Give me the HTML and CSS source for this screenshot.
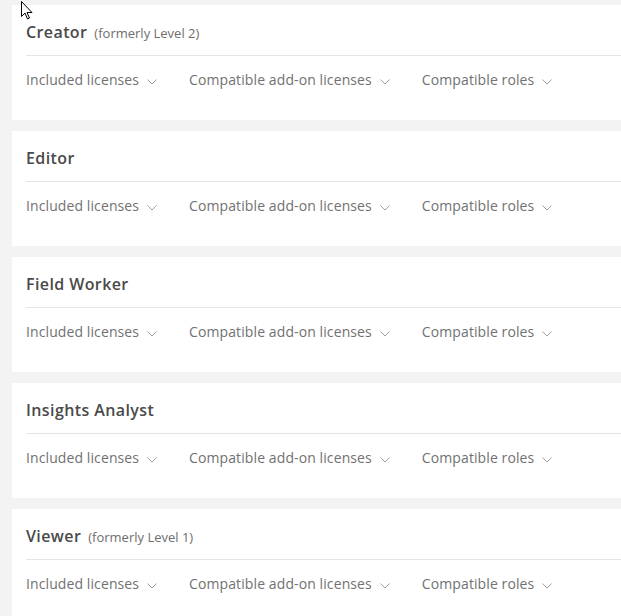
FILE: index.html
```html
<!DOCTYPE html>
<html>
<head>
<meta charset="utf-8">
<link rel="stylesheet" href="styles.css">
</head>
<body>
<div class="list">
  <section class="card">
    <div class="head"><h2 class="title">Creator</h2><span class="note">(formerly Level 2)</span></div>
    <div class="links">
      <span class="link">Included licenses <svg class="chev" viewBox="0 0 10 6"><path d="M0.5 0.5l4.5 4.5 4.5-4.5"/></svg></span>
      <span class="link">Compatible add-on licenses <svg class="chev" viewBox="0 0 10 6"><path d="M0.5 0.5l4.5 4.5 4.5-4.5"/></svg></span>
      <span class="link">Compatible roles <svg class="chev" viewBox="0 0 10 6"><path d="M0.5 0.5l4.5 4.5 4.5-4.5"/></svg></span>
    </div>
  </section>
  <section class="card">
    <div class="head"><h2 class="title">Editor</h2></div>
    <div class="links">
      <span class="link">Included licenses <svg class="chev" viewBox="0 0 10 6"><path d="M0.5 0.5l4.5 4.5 4.5-4.5"/></svg></span>
      <span class="link">Compatible add-on licenses <svg class="chev" viewBox="0 0 10 6"><path d="M0.5 0.5l4.5 4.5 4.5-4.5"/></svg></span>
      <span class="link">Compatible roles <svg class="chev" viewBox="0 0 10 6"><path d="M0.5 0.5l4.5 4.5 4.5-4.5"/></svg></span>
    </div>
  </section>
  <section class="card">
    <div class="head"><h2 class="title">Field Worker</h2></div>
    <div class="links">
      <span class="link">Included licenses <svg class="chev" viewBox="0 0 10 6"><path d="M0.5 0.5l4.5 4.5 4.5-4.5"/></svg></span>
      <span class="link">Compatible add-on licenses <svg class="chev" viewBox="0 0 10 6"><path d="M0.5 0.5l4.5 4.5 4.5-4.5"/></svg></span>
      <span class="link">Compatible roles <svg class="chev" viewBox="0 0 10 6"><path d="M0.5 0.5l4.5 4.5 4.5-4.5"/></svg></span>
    </div>
  </section>
  <section class="card">
    <div class="head"><h2 class="title">Insights Analyst</h2></div>
    <div class="links">
      <span class="link">Included licenses <svg class="chev" viewBox="0 0 10 6"><path d="M0.5 0.5l4.5 4.5 4.5-4.5"/></svg></span>
      <span class="link">Compatible add-on licenses <svg class="chev" viewBox="0 0 10 6"><path d="M0.5 0.5l4.5 4.5 4.5-4.5"/></svg></span>
      <span class="link">Compatible roles <svg class="chev" viewBox="0 0 10 6"><path d="M0.5 0.5l4.5 4.5 4.5-4.5"/></svg></span>
    </div>
  </section>
  <section class="card">
    <div class="head"><h2 class="title">Viewer</h2><span class="note">(formerly Level 1)</span></div>
    <div class="links">
      <span class="link">Included licenses <svg class="chev" viewBox="0 0 10 6"><path d="M0.5 0.5l4.5 4.5 4.5-4.5"/></svg></span>
      <span class="link">Compatible add-on licenses <svg class="chev" viewBox="0 0 10 6"><path d="M0.5 0.5l4.5 4.5 4.5-4.5"/></svg></span>
      <span class="link">Compatible roles <svg class="chev" viewBox="0 0 10 6"><path d="M0.5 0.5l4.5 4.5 4.5-4.5"/></svg></span>
    </div>
  </section>
</div>
<svg class="cursor" viewBox="0 0 12 19" width="12" height="19"><path d="M0.5 0.5v15l3.5-3.5 2.5 6 2-1-2.5-5.5h5z" fill="#fff" stroke="#000" stroke-width="1"/></svg>
</body>
</html>
```
FILE: styles.css
```css
html, body {
  margin: 0;
  padding: 0;
  background: #f3f3f3;
  font-family: "Open Sans", Lato, sans-serif;
}
.list {
  padding: 5px 0 0 12px;
  display: flex;
  flex-direction: column;
  gap: 11px;
}
.card {
  background: #fff;
  padding: 0 0 30px 14px;
  height: 115px;
  box-sizing: border-box;
}
.head {
  display: flex;
  align-items: baseline;
  gap: 7px;
  padding: 17px 0 12px;
  border-bottom: 1px solid #e4e4e4;
  height: 51px;
  box-sizing: border-box;
}
.title {
  margin: 0;
  font-size: 16px;
  font-weight: 600;
  color: #4a4a4a;
  line-height: 20px;
  letter-spacing: 0.4px;
}
.note {
  font-size: 13px;
  color: #6e6e6e;
}
.links {
  display: flex;
  gap: 32px;
  padding-top: 14px;
  line-height: 20px;
}
.link {
  font-size: 14px;
  color: #717171;
  letter-spacing: 0.1px;
  display: inline-flex;
  align-items: center;
  gap: 8px;
}
.chev {
  width: 10px;
  height: 6px;
  fill: none;
  stroke: #a0a0a0;
  stroke-width: 1;
  margin-top: 3px;
}
.cursor {
  position: absolute;
  left: 21px;
  top: 1px;
}
```
